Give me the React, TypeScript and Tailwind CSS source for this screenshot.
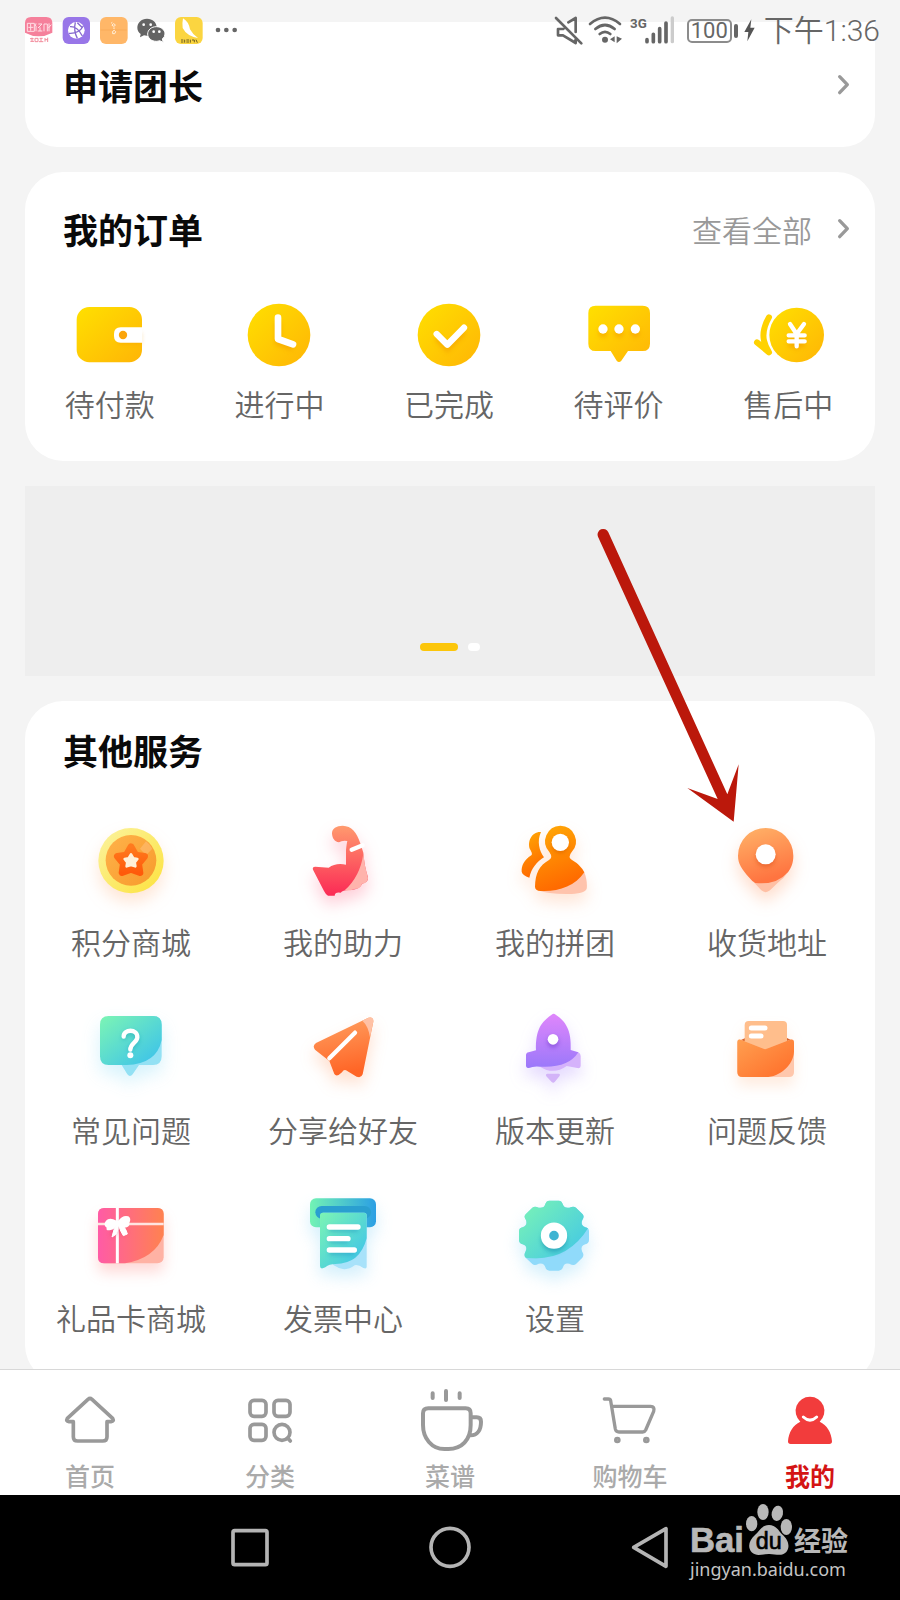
import type { ReactNode } from "react";

type IconProps = { box: string; className: string; children: ReactNode };

function Icon({ box, className, children }: IconProps) {
  return (
    <svg viewBox={box} className={`shrink-0 overflow-visible ${className}`} fill="none" aria-hidden="true">
      {children}
    </svg>
  );
}

type GradientProps = { id: string; from: string; to: string; x2?: string; y2?: string };

function Gradient({ id, from, to, x2 = "1", y2 = "1" }: GradientProps) {
  return (
    <linearGradient id={id} x1="0" y1="0" x2={x2} y2={y2}>
      <stop offset="0" stopColor={from} />
      <stop offset="1" stopColor={to} />
    </linearGradient>
  );
}

function SharedDefs() {
  return (
    <svg className="absolute size-0" aria-hidden="true">
      <defs>
        <Gradient id="gold" from="#ffe000" to="#ffb506" />
        <Gradient id="coin" from="#fbf3a0" to="#fde23c" y2="1" />
        <Gradient id="coinInner" from="#ffb24a" to="#f79a2c" />
        <Gradient id="star" from="#ff7a1e" to="#ff5a0a" x2="0" />
        <Gradient id="arm" from="#ff9a6e" to="#fb2a55" x2="0" />
        <Gradient id="people" from="#ffab05" to="#ff6a00" x2="0.3" />
        <Gradient id="pin" from="#ffb469" to="#ff7440" x2="0.3" />
        <Gradient id="aqua" from="#7cf5b4" to="#38bfee" />
        <Gradient id="plane" from="#ffa263" to="#ff6526" x2="0.2" />
        <Gradient id="rocket" from="#df86fb" to="#9a78fa" x2="0" />
        <Gradient id="mail" from="#ff9f50" to="#ff6c28" />
        <Gradient id="gift" from="#ff5ba6" to="#ff8250" y2="0" />
        <Gradient id="printer" from="#72f3b4" to="#2b9fe4" y2="0" />
        <filter id="soft" x="-50%" y="-50%" width="200%" height="200%">
          <feGaussianBlur stdDeviation="7" />
        </filter>
      </defs>
    </svg>
  );
}

/* ---------- status bar ---------- */

function StatusBar() {
  return (
    <header className="pointer-events-none absolute inset-x-0 top-0 z-10 flex h-[61px] items-center justify-between pl-[25px] pr-5 text-[#666]">
      <div className="flex items-center gap-[11px]">
        <Icon box="75 51 81 81" className="size-[27px]">
          <rect x="75" y="51" width="82" height="81" rx="18" fill="#fff" />
          <path d="M75 98V69Q75 51 93 51H139Q157 51 157 69V98Q116 120 75 98Z" fill="#f5809b" />
          <path d="M82 70H103V94H82ZM92 72V92M85 82H100M108 70L106 78M108 78V94M115 72H126L114 84M120 82V93M113 93H127M132 72V94M132 72H142V94M147 70V94M154 74L145 84" stroke="#ffdfe6" strokeWidth="3" />
          <path d="M90 116H101M91 124H102M96 113V126M105 115H114V125H105ZM119 115H128M123 115V125M117 125H130M135 114V125M135 119H144M143 113V126" stroke="#f28b9c" strokeWidth="3" />
        </Icon>
        <Icon box="189 51 81 81" className="size-[27px]">
          <rect x="188" y="51" width="82" height="81" rx="18" fill="#9876e8" />
          <circle cx="229" cy="91" r="25" fill="#fff" />
          <path d="M210 80Q232 78 247 108M226 67Q220 92 232 115M207 100Q236 102 250 78M232 68L246 82" stroke="#8668cf" strokeWidth="4" />
        </Icon>
        <Icon box="303 51 81 81" className="size-[27px]">
          <rect x="300" y="51" width="83" height="81" rx="18" fill="#ffb768" />
          <path d="M302 90H380" stroke="#f6a652" strokeWidth="2" />
          <path d="M333 70L337 67M336 76Q341 66 346 76Q342 82 336 76M342 82V87M338 94Q343 87 347 95Q346 104 338 101Z" stroke="#fff0db" strokeWidth="3" />
        </Icon>
        <Icon box="417 51 81 81" className="size-[27px]">
          <path d="M441 56C424 56 412 68 412 83Q412 94 422 102L420 112L432 106Q436 107 441 107C459 107 470 97 470 82C470 67 458 56 441 56Z" fill="#646464" />
          <path d="M469 80C454 80 443 90 443 102S454 124 469 124Q474 124 479 122L490 127L487 117Q495 111 495 102C495 90 484 80 469 80Z" fill="#646464" stroke="#fff" strokeWidth="3" />
          <circle cx="431" cy="74" r="4" fill="#fff" />
          <circle cx="452" cy="74" r="4" fill="#fff" />
          <circle cx="461" cy="95" r="4" fill="#fff" />
          <circle cx="478" cy="95" r="4" fill="#fff" />
        </Icon>
        <Icon box="531 51 81 81" className="size-[27px]">
          <rect x="525" y="51" width="83" height="81" rx="18" fill="#fbd540" />
          <path d="M549 55Q566 65 570 88Q577 102 594 114Q560 108 548 84Q546 70 549 55Z" fill="#fff" />
          <path d="M543 120H550M543 126H550M554 119V128M559 120H567M559 126H567M571 119V128M576 120H583V127M588 119L592 128" stroke="#6f6020" strokeWidth="3" />
        </Icon>
        <Icon box="645 51 66 81" className="h-[27px] w-[22px]">
          <circle cx="654" cy="90" r="7" fill="#666" />
          <circle cx="679" cy="90" r="7" fill="#666" />
          <circle cx="704" cy="90" r="7" fill="#666" />
        </Icon>
      </div>
      <div className="flex items-center gap-1.5">
        <Icon box="315 51 84 81" className="h-[27px] w-[28px]">
          <path d="M318 54L394 130M340 87H324V106H339L377 129V116M355 67L377 54V96" stroke="#666" strokeWidth="8" strokeLinecap="round" strokeLinejoin="round" />
        </Icon>
        <Icon box="417 51 105 81" className="h-[27px] w-[35px]">
          <path d="M420 72Q465 34 510 72M436 87Q465 63 494 87M449 102Q465 89 481 102" stroke="#666" strokeWidth="8" strokeLinecap="round" />
          <circle cx="465" cy="119" r="9" fill="#666" />
          <path d="M480 118L494 109V127ZM500 109V130L516 116Z" fill="#666" />
        </Icon>
        <Icon box="540 51 153 81" className="h-[27px] w-[51px]">
          <text x="540" y="83" fill="#666" fontSize="40" fontWeight="700" fontFamily="Roboto, sans-serif">3G</text>
          <path d="M591 119V125M610 103V125M629 86V125M648 69V125" stroke="#666" strokeWidth="11" strokeLinecap="round" />
          <path d="M667 54V125" stroke="#ccc" strokeWidth="10" strokeLinecap="round" />
        </Icon>
        <div className="flex w-[51px] items-center gap-0.5">
          <span className="flex h-6 w-[45px] items-center justify-center rounded-[5px] border-2 border-[#8c8c8c] font-['Roboto',sans-serif] text-[22px] leading-5">100</span>
          <span className="h-3.5 w-1 rounded-sm bg-[#666]" />
        </div>
        <Icon box="882 51 42 81" className="h-[27px] w-[14px]">
          <path d="M904 58L883 96H895L892 124L914 83H901Z" fill="#555" />
        </Icon>
        <time className="font-['Roboto','Noto_Sans_CJK_SC',sans-serif] text-[30px] font-[350] leading-9">下午1:36</time>
      </div>
    </header>
  );
}

function Chevron() {
  return (
    <Icon box="0 0 36 72" className="h-6 w-3">
      <path d="M5 11L28 35L5 59" stroke="#999" strokeWidth="10" strokeLinecap="round" strokeLinejoin="round" />
    </Icon>
  );
}

/* ---------- orders ---------- */

const orders: { label: string; box: string; art: ReactNode }[] = [
  {
    label: "待付款",
    box: "210 375 240 240",
    art: (
      <>
        <rect x="230" y="411" width="196" height="166" rx="38" fill="url(#gold)" />
        <path d="M424 488H355V522H424Z" fill="#f29a00" opacity=".4" filter="url(#soft)" />
        <path d="M427 472H362Q342 472 342 492V498Q342 518 362 518H427Z" fill="#fff" />
        <circle cx="369" cy="495" r="12.500" fill="#fba50c" />
      </>
    ),
  },
  {
    label: "进行中",
    box: "717 375 240 240",
    art: (
      <>
        <circle cx="837" cy="495" r="94" fill="url(#gold)" />
        <path d="M834 455V517L879 533" stroke="#f29a00" opacity=".5" strokeWidth="20" filter="url(#soft)" />
        <path d="M834 443V507L879 523" stroke="#fff" strokeWidth="20" strokeLinecap="round" strokeLinejoin="round" />
      </>
    ),
  },
  {
    label: "已完成",
    box: "1227 375 240 240",
    art: (
      <>
        <circle cx="1347" cy="495" r="94" fill="url(#gold)" />
        <path d="M1310 504L1342 536L1392 485" stroke="#f29a00" opacity=".5" strokeWidth="19" filter="url(#soft)" />
        <path d="M1310 492L1342 524L1392 473" stroke="#fff" strokeWidth="19" strokeLinecap="round" strokeLinejoin="round" />
      </>
    ),
  },
  {
    label: "待评价",
    box: "387 375 240 240",
    art: (
      <>
        <path d="M437 407H578Q600 407 600 429V521Q600 543 578 543H534L514 572Q507 580 500 572L482 543H437Q415 543 415 521V429Q415 407 437 407Z" fill="url(#gold)" />
        <g fill="#f29a00" opacity=".5" filter="url(#soft)">
          <circle cx="459" cy="489" r="14" />
          <circle cx="507" cy="489" r="14" />
          <circle cx="556" cy="489" r="14" />
        </g>
        <g fill="#fff">
          <circle cx="459" cy="477" r="14" />
          <circle cx="507" cy="477" r="14" />
          <circle cx="556" cy="477" r="14" />
        </g>
      </>
    ),
  },
  {
    label: "售后中",
    box: "894 375 240 240",
    art: (
      <>
        <circle cx="1040" cy="495" r="82" fill="url(#gold)" />
        <path d="M957 442Q935 480 942 512Q946 530 957 547L921 517" stroke="#ffd200" strokeWidth="18" strokeLinecap="round" strokeLinejoin="round" />
        <path d="M1015 506H1065M1015 525H1065M1040 500V538" stroke="#f29a00" opacity=".6" strokeWidth="14" filter="url(#soft)" />
        <path d="M1020 462L1040 492L1062 462M1040 492V529M1016 496H1064M1016 514H1064" stroke="#fff" strokeWidth="13" strokeLinecap="round" strokeLinejoin="round" />
      </>
    ),
  },
];

/* ---------- services ---------- */

const services: { label: string; box: string; shadow: string; art: ReactNode }[] = [
  {
    label: "积分商城",
    box: "123 342 300 300",
    shadow: "drop-shadow-[0_9px_8px_#ff9c5a40]",
    art: (
      <>
        <circle cx="273" cy="482" r="98" fill="url(#coin)" />
        <circle cx="273" cy="481" r="76" fill="url(#coinInner)" />
        <path d="M300 446L318 424Q330 434 337 446L318 466Z" fill="#ffc68a" opacity=".45" />
        <path d="M273 440L287 465L314 469L296 491L301 518L273 508L245 518L250 491L232 469L259 465Z" fill="#f25a00" opacity=".6" filter="url(#soft)" />
        <path d="M273 440L287 465L314 469L296 491L300 518L273 508L246 518L250 491L232 469L259 465Z" fill="url(#star)" stroke="url(#star)" strokeWidth="20" strokeLinejoin="round" />
        <path d="M273 463L280 475L292 477L284 487L286 499L273 495L260 499L262 487L254 477L266 475Z" fill="#fff0d8" stroke="#fff0d8" strokeWidth="8" strokeLinejoin="round" />
      </>
    ),
  },
  {
    label: "我的助力",
    box: "759 342 300 300",
    shadow: "drop-shadow-[0_9px_8px_#ff3c6440]",
    art: (
      <>
        <path d="M876 401C875 385 890 377 908 377C935 378 950 396 961 430L970 458C972 485 977 510 984 532Q985 548 966 551Q962 567 932 570Q910 568 902 578Q885 575 884 587H864Q858 585 852 573L819 509Q816 500 826 500L866 503Q888 487 918 494V450Q920 430 922 423Q907 420 897 427C883 424 877 414 876 401Z" fill="url(#arm)" />
        <path d="M970 462Q960 530 914 571Q930 573 943 567Q961 567 966 551Q983 550 984 534Q973 495 970 462Z" fill="#ffb3ac" />
        <path d="M935 449L968 436" stroke="#fff" strokeWidth="13" strokeLinecap="round" />
      </>
    ),
  },
  {
    label: "我的拼团",
    box: "135 342 300 300",
    shadow: "drop-shadow-[0_9px_8px_#ff783230]",
    art: (
      <>
        <path d="M243 396C215 394 201 425 210 448Q219 462 214 466C192 480 184 497 185 515Q187 525 208 533C214 505 230 486 252 472C238 452 230 425 243 396Z" fill="url(#people)" />
        <path d="M373 517C380 535 382 555 380 566Q375 582 320 582Q260 580 238 572Z" fill="#ffc3ac" />
        <path d="M301 377A47 47 0 0 1 335 456Q322 472 336 480Q361 494 373 517C345 560 292 576 242 573Q225 572 225 560C226 520 238 496 267 480Q280 473 268 456A47 47 0 0 1 301 377Z" fill="url(#people)" />
        <circle cx="301" cy="436" r="24" fill="#d45a00" opacity=".5" filter="url(#soft)" />
        <circle cx="301" cy="427" r="26" fill="#fff" />
      </>
    ),
  },
  {
    label: "收货地址",
    box: "771 342 300 300",
    shadow: "drop-shadow-[0_9px_8px_#ff783240]",
    art: (
      <>
        <path d="M985 515Q970 536 955 547L930 571Q917 582 904 571L880 545Z" fill="#ffbfa4" />
        <path d="M834 467A83 83 0 1 1 1000 467C1000 490 993 504 985 515Q950 556 886 549Q876 544 866 531C846 507 834 492 834 467Z" fill="url(#pin)" />
        <circle cx="917" cy="472" r="29" fill="#d84a18" opacity=".5" filter="url(#soft)" />
        <circle cx="917" cy="463" r="30" fill="#fff" />
      </>
    ),
  },
  {
    label: "常见问题",
    box: "123 36 300 300",
    shadow: "drop-shadow-[0_9px_9px_#46c8f038]",
    art: (
      <>
        <path d="M206 78H339Q365 78 365 104V199Q365 225 339 225H297L278 253Q270 263 262 253L245 225H206Z" fill="#93e1f4" />
        <path d="M206 78H339Q365 78 365 104V150Q350 222 260 225H206Q180 225 180 199V104Q180 78 206 78Z" fill="url(#aqua)" />
        <path d="M252 148C252 122 293 122 292 148C292 166 270 166 271 184" stroke="#1798ad" strokeWidth="12" opacity=".5" filter="url(#soft)" />
        <path d="M251 140C250 117 293 115 292 142C291 158 270 160 271 179" stroke="#fff" strokeWidth="13" strokeLinecap="round" />
        <circle cx="271" cy="196" r="9" fill="#fff" />
      </>
    ),
  },
  {
    label: "分享给好友",
    box: "759 36 300 300",
    shadow: "drop-shadow-[0_9px_8px_#ff78323a]",
    art: (
      <>
        <path d="M985 83Q1001 79 1000 95L968 253Q964 265 950 260L918 241Q911 238 906 247Q890 263 883 252L868 213L825 179Q816 167 828 159Z" fill="url(#plane)" />
        <path d="M967 92L985 83Q1001 79 1000 95L990 142Q985 108 967 92Z" fill="#ffc1a5" />
        <path d="M868 205L945 128" stroke="#fff" strokeWidth="13" strokeLinecap="round" />
      </>
    ),
  },
  {
    label: "版本更新",
    box: "135 36 300 300",
    shadow: "drop-shadow-[0_9px_8px_#a078fa48]",
    art: (
      <>
        <path d="M362 198V228Q362 236 352 234L320 228Q281 256 240 230L355 187Q362 190 362 198Z" fill="#d5b2fb" />
        <path d="M275 74Q281 69 287 74C317 94 335 120 332 180L355 187Q325 235 240 230Q220 228 207 234Q198 236 198 226V196Q198 188 206 187L228 181C226 120 244 95 275 74Z" fill="url(#rocket)" />
        <path d="M261 251H297Q302 253 298 259L284 276Q280 281 275 276L259 259Q256 253 261 251Z" fill="#d3b4f8" />
        <circle cx="279" cy="156" r="17" fill="#6a35c8" opacity=".5" filter="url(#soft)" />
        <circle cx="279" cy="148" r="16" fill="#fff" />
      </>
    ),
  },
  {
    label: "问题反馈",
    box: "771 36 300 300",
    shadow: "drop-shadow-[0_9px_7px_#ff8c462b]",
    art: (
      <>
        <path d="M836 153L856 144V165ZM981 144L999 153L978 165Z" fill="#d8622a" />
        <rect x="854" y="93" width="127" height="100" rx="12" fill="#ffbe8c" />
        <path d="M842 149L907 175Q915 180 924 175L990 149Q1002 146 1002 158V246Q1002 261 987 261H847Q832 261 832 246V158Q832 146 842 149Z" fill="#ffc7ac" />
        <path d="M842 149L907 175Q915 180 924 175L990 149Q1002 146 1002 158V185C1000 225 960 262 915 261H847Q832 261 832 246V158Q832 146 842 149Z" fill="url(#mail)" />
        <path d="M874 114H915M874 138H903" stroke="#fff" strokeWidth="15" strokeLinecap="round" />
      </>
    ),
  },
  {
    label: "礼品卡商城",
    box: "123 600 300 300",
    shadow: "drop-shadow-[0_9px_7px_#ff645a3d]",
    art: (
      <>
        <rect x="174" y="654" width="197" height="166" rx="18" fill="#ffb2a4" />
        <path d="M192 654H353Q371 654 371 672V735Q345 805 255 820H192Q174 820 174 802V672Q174 654 192 654Z" fill="url(#gift)" />
        <path d="M232 654V820" stroke="#fff" strokeWidth="9" />
        <path d="M174 702H371" stroke="#ffe4e0" strokeWidth="7" />
        <path d="M232 702L218 738M236 702L254 732" stroke="#d83660" strokeWidth="14" opacity=".5" filter="url(#soft)" />
        <path d="M230 692Q208 681 198 692Q188 704 200 713Q197 724 212 720Q224 718 231 705Q241 717 254 713Q270 712 268 699Q275 685 265 679Q248 674 235 692Z" fill="#fff" />
        <path d="M232 702Q220 716 216 741L228 733Q236 720 235 704Q242 726 250 737L262 732Q258 712 239 700Z" fill="#fff" stroke="#fff" strokeWidth="3" strokeLinejoin="round" />
      </>
    ),
  },
  {
    label: "发票中心",
    box: "759 600 300 300",
    shadow: "drop-shadow-[0_9px_8px_#46bef03a]",
    art: (
      <>
        <rect x="810" y="625" width="198" height="87" rx="18" fill="url(#printer)" />
        <rect x="826" y="648" width="167" height="38" rx="19" fill="#2a9fd0" />
        <path d="M848 668H972Q980 668 980 676V830Q980 838 970 834Q955 823 944 826Q925 840 909 837Q895 835 880 825Z" fill="#a8e2fa" />
        <path d="M848 668H972Q980 668 980 676V745Q960 822 886 822Q868 822 856 832Q840 840 840 828V676Q840 668 848 668Z" fill="url(#aqua)" />
        <path d="M868 718H954M868 753H924M868 788H943" stroke="#1a93c0" strokeWidth="14" opacity=".5" filter="url(#soft)" />
        <path d="M868 711H954M868 746H924M868 780H943" stroke="#fff" strokeWidth="16" strokeLinecap="round" />
      </>
    ),
  },
  {
    label: "设置",
    box: "135 600 300 300",
    shadow: "drop-shadow-[0_9px_8px_#46bef03a]",
    art: (
      <>
        <defs>
          <clipPath id="gearTop">
            <path d="M150 600H420L386 712Q320 820 195 803H150Z" />
          </clipPath>
          <path
            id="gear"
            d="M268 632H296Q305 632 308 642Q313 656 328 653Q341 647 348 653L368 673Q374 680 367 690Q360 706 376 712Q387 714 387 724V750Q387 760 376 763Q360 768 366 784Q374 796 367 803L348 822Q341 828 328 821Q312 817 309 832Q305 842 296 842H268Q259 842 256 832Q252 817 236 821Q224 828 217 822L197 803Q190 796 197 784Q204 768 188 763Q177 760 177 750V724Q177 714 188 712Q204 706 198 690Q190 680 197 673L217 653Q224 647 236 653Q252 656 256 642Q259 632 268 632Z"
          />
        </defs>
        <use href="#gear" fill="#90dafa" />
        <use href="#gear" fill="url(#aqua)" clipPath="url(#gearTop)" />
        <circle cx="282" cy="749" r="38" fill="#1488a8" opacity=".5" filter="url(#soft)" />
        <circle cx="282" cy="737" r="27" fill="#3fb4d2" stroke="#fff" strokeWidth="25" />
      </>
    ),
  },
];

/* ---------- tab bar ---------- */

const tabs: { label: string; box: string; active?: boolean; art: ReactNode }[] = [
  {
    label: "首页",
    box: "162 75 216 216",
    art: <path d="M264 118Q270 113 276 118L338 175Q343 184 333 185H321V230Q321 243 308 243H233Q220 243 220 230V185H207Q197 184 202 175Z" />,
  },
  {
    label: "分类",
    box: "702 75 216 216",
    art: (
      <>
        <rect x="750" y="121" width="48" height="48" rx="12" />
        <rect x="822" y="121" width="48" height="48" rx="12" />
        <rect x="750" y="193" width="48" height="48" rx="12" />
        <circle cx="846" cy="217" r="24" />
        <path d="M863 234L871 243" />
      </>
    ),
  },
  {
    label: "菜谱",
    box: "1242 75 216 216",
    art: (
      <>
        <path d="M1285 145H1397Q1412 145 1412 160V195C1412 240 1385 267 1345 267H1333C1295 267 1269 235 1269 195V160Q1269 145 1285 145ZM1412 172H1430Q1443 172 1443 185C1443 210 1432 226 1412 226" strokeWidth="12" />
        <path d="M1298 100V114M1338 93V120M1379 100V114" strokeWidth="12" />
      </>
    ),
  },
  {
    label: "购物车",
    box: "432 75 216 216",
    art: (
      <>
        <path d="M463 117H475Q481 117 482 122L496 207Q498 216 507 216H578Q584 216 587 210L611 154Q615 139 602 139H486" strokeWidth="10" />
        <circle cx="502" cy="240" r="4.500" />
        <circle cx="589" cy="240" r="4.500" />
      </>
    ),
  },
  {
    label: "我的",
    box: "972 75 216 216",
    active: true,
    art: (
      <>
        <path d="M1080 110A43 43 0 0 1 1109 185C1131 196 1144 216 1146 244Q1146 252 1138 252H1022Q1014 252 1014 244C1016 216 1029 196 1051 185A43 43 0 0 1 1080 110Z" fill="#f23c3c" stroke="none" />
        <path d="M1060 171Q1080 190 1100 171" stroke="#fff" strokeWidth="9" />
      </>
    ),
  },
];

function PointerArrow() {
  return (
    <svg
      viewBox="570 120 480 930"
      className="pointer-events-none absolute right-[150px] top-[520px] z-10 h-[310px] w-[160px]"
      aria-hidden="true"
    >
      <path d="M594 170A16 16 0 0 1 625 157L982 943L1016 853L1001 1025L862 924L953 957Z" fill="#bb180b" />
    </svg>
  );
}

function Watermark() {
  return (
    <a href="#jingyan" className="absolute bottom-[17px] right-[50px] flex w-[160px] flex-col text-[#c4c4c4]">
      <svg viewBox="720 423 480 162" className="h-[54px] w-[160px] overflow-visible" fill="#b8b8b8" aria-label="Baidu 经验">
        <text x="720" y="575" fontSize="104" fontWeight="700" fontFamily="Liberation Sans, sans-serif" stroke="#b8b8b8" strokeWidth="2">Bai</text>
        <ellipse cx="905" cy="491" rx="17" ry="23" />
        <ellipse cx="939" cy="456" rx="17" ry="24" />
        <ellipse cx="982" cy="460" rx="17" ry="23" transform="rotate(12 982 460)" />
        <ellipse cx="1009" cy="501" rx="17" ry="24" />
        <path d="M957 495C978 495 985 511 996 523C1014 538 1022 560 1009 576C995 591 975 581 956 582C937 582 920 591 905 577C891 560 898 540 915 525C929 512 935 495 957 495Z" />
        <text x="917" y="567" fontSize="70" fontFamily="Liberation Sans, sans-serif" fill="#000" stroke="#000" strokeWidth="2">du</text>
        <text x="1032" y="573" fontSize="81" fontWeight="700" fontFamily="Noto Sans CJK SC, sans-serif">经验</text>
      </svg>
      <span className="whitespace-nowrap font-['Noto_Sans',sans-serif] text-[18px] leading-7">jingyan.baidu.com</span>
    </a>
  );
}

export default function App() {
  return (
    <div className="relative flex h-screen flex-col overflow-hidden bg-[#f4f4f4] font-['Noto_Sans_CJK_SC',sans-serif]">
      <SharedDefs />
      <StatusBar />

      <main className="flex min-h-0 flex-1 flex-col gap-[25px] overflow-y-auto px-[25px] pb-[25px] pt-[22px] [scrollbar-width:none]">
        <section className="shrink-0 rounded-b-[32px] bg-white pb-10 pl-[38px] pr-[25px] pt-[41px]">
          <button type="button" className="flex w-full items-center justify-between">
            <h2 className="text-[35px] font-bold leading-[44px] text-[#0a0a0a]">申请团长</h2>
            <Chevron />
          </button>
        </section>

        <section className="shrink-0 rounded-[38px] bg-white pb-[38px] pt-[35px]">
          <div className="flex items-center justify-between pl-[38px] pr-[25px]">
            <h2 className="text-[35px] font-bold leading-[44px] text-[#0a0a0a]">我的订单</h2>
            <button type="button" className="flex items-center gap-[26px] text-[30px] font-[350] leading-[44px] text-[#999]">
              查看全部
              <Chevron />
            </button>
          </div>
          <div className="mt-11 grid grid-cols-5 pr-0.5">
            {orders.map((item) => (
              <button key={item.label} type="button" className="flex flex-col items-center gap-2">
                <Icon box={item.box} className="size-20">{item.art}</Icon>
                <span className="text-[30px] font-[350] leading-10 text-[#666]">{item.label}</span>
              </button>
            ))}
          </div>
        </section>

        <section className="flex h-[190px] shrink-0 items-end justify-center gap-2.5 bg-[#eee] pb-[25px]" aria-label="banner">
          <span className="h-2 w-[38px] rounded-full bg-[#fcc60a]" />
          <span className="h-2 w-3 rounded-full bg-white" />
        </section>

        <section className="shrink-0 rounded-[38px] bg-white pb-[46px] pt-[27px]">
          <h2 className="pl-[38px] text-[35px] font-bold leading-[44px] text-[#0a0a0a]">其他服务</h2>
          <div className="mt-[42px] grid grid-cols-4 gap-y-[41px] pr-0.5">
            {services.map((item) => (
              <button key={item.label} type="button" className="flex flex-col items-center gap-[7px]">
                <Icon box={item.box} className={`size-[100px] ${item.shadow}`}>{item.art}</Icon>
                <span className="whitespace-nowrap text-[30px] font-[350] leading-10 text-[#666]">{item.label}</span>
              </button>
            ))}
          </div>
        </section>
      </main>

      <PointerArrow />

      <nav className="grid shrink-0 grid-cols-5 border-t border-[#d8d8d8] bg-white pb-1 pt-[15px]">
        {tabs.map((tab) => (
          <a
            key={tab.label}
            href={`#${tab.label}`}
            className={`flex flex-col items-center gap-0.5 text-[25px] leading-8 ${tab.active ? "font-bold text-[#d41414]" : "font-medium text-[#aaa]"}`}
          >
            <Icon box={tab.box} className="size-[72px]">
              <g stroke="#999" strokeWidth="11" strokeLinecap="round" strokeLinejoin="round">{tab.art}</g>
            </Icon>
            {tab.label}
          </a>
        ))}
      </nav>

      <footer className="relative flex h-[105px] shrink-0 items-center justify-center gap-[160px] bg-black">
        <button type="button" aria-label="最近任务">
          <Icon box="690 504 120 120" className="size-10">
            <rect x="699" y="512" width="102" height="102" rx="5" stroke="#b4b4b4" strokeWidth="11" />
          </Icon>
        </button>
        <button type="button" aria-label="主屏幕">
          <Icon box="1290 504 120 120" className="size-10">
            <circle cx="1350" cy="562" r="57" stroke="#b4b4b4" strokeWidth="11" />
          </Icon>
        </button>
        <button type="button" aria-label="返回">
          <Icon box="540 504 120 120" className="size-10">
            <path d="M551 562L648 506V619Z" stroke="#b4b4b4" strokeWidth="11" strokeLinejoin="round" />
          </Icon>
        </button>
        <Watermark />
      </footer>
    </div>
  );
}
